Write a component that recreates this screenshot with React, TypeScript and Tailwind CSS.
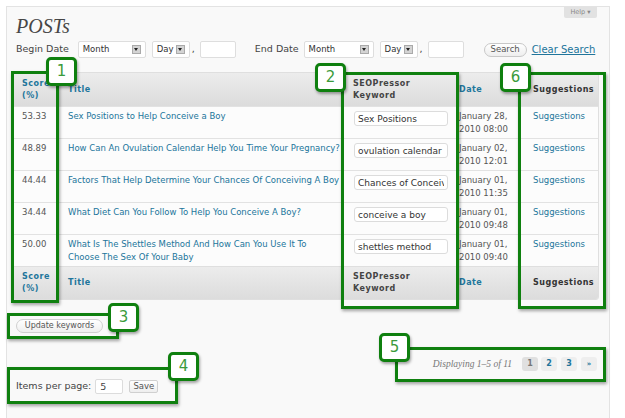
import React from 'react'

const ROWS = [
  { score: '53.33', title: ['Sex Positions to Help Conceive a Boy'], kw: 'Sex Positions', d1: 'January 28,', d2: '2010 08:00' },
  { score: '48.89', title: ['How Can An Ovulation Calendar Help You Time Your Pregnancy?'], kw: 'ovulation calendar', d1: 'January 02,', d2: '2010 12:01' },
  { score: '44.44', title: ['Factors That Help Determine Your Chances Of Conceiving A Boy'], kw: 'Chances of Conceiving', d1: 'January 01,', d2: '2010 11:35' },
  { score: '34.44', title: ['What Diet Can You Follow To Help You Conceive A Boy?'], kw: 'conceive a boy', d1: 'January 01,', d2: '2010 09:48' },
  { score: '50.00', title: ['What Is The Shettles Method And How Can You Use It To', 'Choose The Sex Of Your Baby'], kw: 'shettles method', d1: 'January 01,', d2: '2010 09:40' },
]

const cols = 'grid grid-cols-[45px_287px_112px_70px_71px]'

function Select({ label, w }: { label: string; w: string }) {
  return (
    <div className={`${w} h-[17px] flex items-center justify-between bg-white border border-[#dedede] rounded-[2px] pl-[4px] pr-[4px]`}>
      <span className="text-[8.5px] text-[#333]">{label}</span>
      <span className="w-[9px] h-[9px] bg-[#d4d4d4] border border-[#aaa] flex items-center justify-center">
        <span className="w-0 h-0 border-l-[2.5px] border-r-[2.5px] border-t-[3px] border-l-transparent border-r-transparent border-t-[#222]" />
      </span>
    </div>
  )
}

function HeadRow({ bottom }: { bottom?: boolean }) {
  return (
    <div className={`${cols} h-[33px] items-center bg-gradient-to-b from-[#ececec] to-[#dcdcdc] text-[8px] font-bold tracking-[0.5px] leading-[12px] ${bottom ? 'border-t border-[#dfdfdf]' : ''}`}>
      <div className="pl-[9px] text-[#21759b]">Score<br />(%)</div>
      <div className="pl-[10px] text-[#21759b]">Title</div>
      <div className="pl-[8px] text-[#444]">SEOPressor<br />Keyword</div>
      <div className="pl-[2px] text-[#21759b]">Date</div>
      <div className="pl-[6px] text-[#333]">Suggestions</div>
    </div>
  )
}

function Box({ cls }: { cls: string }) {
  return <div className={`absolute border-[3px] border-[#0f800f] shadow-[1px_2px_3px_rgba(0,0,0,0.35)] ${cls}`} />
}

function Tag({ n, cls }: { n: string; cls: string }) {
  return (
    <div className={`absolute w-[31px] h-[29px] bg-white border-[3px] border-[#0f800f] rounded-[5px] shadow-[1px_2px_3px_rgba(0,0,0,0.35)] flex items-center justify-center text-[15px] text-[#3b9b3b] ${cls}`}>
      {n}
    </div>
  )
}

export default function App() {
  return (
    <div className="relative w-[625px] h-[418px] overflow-hidden bg-white font-['DejaVu_Sans',Verdana,sans-serif] text-[#333]">
      <div className="ml-[6px] mt-[6px] w-[604px] h-[412px] bg-[#f9f9f9] border-l border-r border-t border-[#e3e3e3]">
        <div className="flex justify-between items-start">
          <h1 className="pl-[9px] pt-[9px] font-['Liberation_Serif',Georgia,serif] italic text-[20px] leading-[20px] text-[#464646]">POSTs</h1>
          <div className="mr-[12px] w-[33px] h-[11px] bg-[#e2e2e2] rounded-b-[2px] text-[6.5px] text-[#888] flex items-center justify-center">Help ▾</div>
        </div>

        <div className="mt-[5px] flex items-center h-[17px] text-[9.5px] text-[#444]">
          <span className="ml-[9px]">Begin Date</span>
          <div className="ml-[9px]"><Select label="Month" w="w-[68px]" /></div>
          <div className="ml-[6px]"><Select label="Day" w="w-[38px]" /></div>
          <span className="ml-[2px]">,</span>
          <div className="ml-[5px] w-[36px] h-[17px] bg-white border border-[#dedede] rounded-[2px]" />
          <span className="ml-[19px]">End Date</span>
          <div className="ml-[5px]"><Select label="Month" w="w-[70px]" /></div>
          <div className="ml-[6px]"><Select label="Day" w="w-[38px]" /></div>
          <span className="ml-[2px]">,</span>
          <div className="ml-[5px] w-[36px] h-[17px] bg-white border border-[#dedede] rounded-[2px]" />
          <div className="ml-[20px] w-[43px] h-[14px] rounded-full border border-[#c8c8c8] bg-gradient-to-b from-white to-[#eeeeee] text-[8.5px] text-[#555] flex items-center justify-center">Search</div>
          <a className="ml-[5px] text-[#21759b] underline text-[10px]">Clear Search</a>
        </div>

        <div className="mt-[14px] ml-[5px] w-[587px] border border-[#dfdfdf] rounded-[3px] overflow-hidden">
          <HeadRow />
          {ROWS.map((r, i) => (
            <div key={i} className={`${cols} h-[32px] bg-[#fcfcfc] border-t border-[#e2e2e2] text-[8.5px] leading-[13px]`}>
              <div className="pl-[9px] pt-[3px] text-[#555]">{r.score}</div>
              <div className="pl-[10px] pt-[3px] text-[#21759b] whitespace-nowrap">
                {r.title.map((t, j) => <div key={j}>{t}</div>)}
              </div>
              <div className="pl-[9px] pt-[4px]">
                <input readOnly value={r.kw} className="w-[94px] h-[15px] bg-white border border-[#dcdcdc] rounded-[3px] px-[3px] text-[9px] text-[#333] outline-none" />
              </div>
              <div className="pl-[2px] pt-[3px] text-[#555] whitespace-nowrap">{r.d1}<br />{r.d2}</div>
              <div className="pl-[6px] pt-[3px] text-[#21759b]">Suggestions</div>
            </div>
          ))}
          <HeadRow bottom />
        </div>

        <div className="mt-[19px] ml-[9px] w-[87px] h-[14px] rounded-full border border-[#d0d0d0] bg-gradient-to-b from-white to-[#efefef] text-[8px] text-[#555] flex items-center justify-center">Update keywords</div>

        <div className="mt-[24px] flex items-center justify-end pr-[12px] h-[14px]">
          <span className="font-['Liberation_Serif',Georgia,serif] italic text-[9.5px] text-[#777] mr-[10px]">Displaying 1–5 of 11</span>
          <span className="w-[16px] h-[14px] rounded-[3px] bg-[#e0e0e0] text-[8px] text-[#777] font-bold flex items-center justify-center">1</span>
          <span className="ml-[3px] w-[16px] h-[14px] rounded-[3px] bg-[#eeeeee] text-[8px] text-[#21759b] font-bold flex items-center justify-center">2</span>
          <span className="ml-[4px] w-[16px] h-[14px] rounded-[3px] bg-[#eeeeee] text-[8px] text-[#21759b] font-bold flex items-center justify-center">3</span>
          <span className="ml-[4px] w-[16px] h-[14px] rounded-[3px] bg-[#eeeeee] text-[7px] text-[#21759b] font-bold flex items-center justify-center">»</span>
        </div>

        <div className="mt-[8px] ml-[9px] flex items-center h-[14px] text-[9.5px] text-[#444]">
          <span>Items per page:</span>
          <input readOnly value="5" className="ml-[4px] w-[28px] h-[15px] bg-white border border-[#dcdcdc] rounded-[2px] px-[4px] text-[9.5px] outline-none" />
          <div className="ml-[6px] w-[29px] h-[13px] border border-[#d0d0d0] rounded-[2px] bg-gradient-to-b from-white to-[#eeeeee] text-[8.5px] text-[#555] flex items-center justify-center">Save</div>
        </div>
      </div>

      <Box cls="left-[11px] top-[71px] w-[48px] h-[232px]" />
      <Box cls="left-[341px] top-[72px] w-[118px] h-[237px]" />
      <Box cls="left-[518px] top-[72px] w-[88px] h-[237px]" />
      <Box cls="left-[7px] top-[313px] w-[112px] h-[26px]" />
      <Box cls="left-[7px] top-[367px] w-[171px] h-[37px]" />
      <Box cls="left-[395px] top-[347px] w-[211px] h-[35px]" />
      <Tag n="1" cls="left-[46px] top-[57px]" />
      <Tag n="2" cls="left-[315px] top-[63px]" />
      <Tag n="6" cls="left-[500px] top-[63px]" />
      <Tag n="3" cls="left-[108px] top-[303px]" />
      <Tag n="4" cls="left-[168px] top-[352px]" />
      <Tag n="5" cls="left-[379px] top-[333px]" />
    </div>
  )
}
